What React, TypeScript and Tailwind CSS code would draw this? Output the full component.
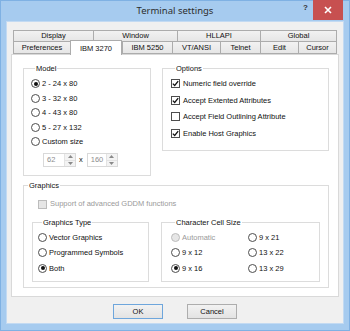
import React from "react";

const row1 = [
  { label: "Display", w: "w-[80px]" },
  { label: "Window", w: "w-[84px]" },
  { label: "HLLAPI", w: "w-[83px]" },
  { label: "Global", w: "w-[77px]" },
];

const row2 = [
  { label: "Preferences", w: "w-[57px]" },
  { label: "IBM 3270", w: "w-[52px]", active: true },
  { label: "IBM 5250", w: "w-[50px]" },
  { label: "VT/ANSI", w: "w-[48px]" },
  { label: "Telnet", w: "w-[40px]" },
  { label: "Edit", w: "w-[38px]" },
  { label: "Cursor", w: "w-[39px]" },
];

function Radio({ label, checked = false, disabled = false, h = "h-[14.5px]" }: { label: string; checked?: boolean; disabled?: boolean; h?: string }) {
  return (
    <div className={`flex items-center ${h}`}>
      <span
        className={`flex h-[9px] w-[9px] shrink-0 items-center justify-center rounded-full border ${
          disabled ? "border-[#bcbcbc] bg-[#e6e6e6]" : "border-[#4d4d4d] bg-white"
        }`}
      >
        {checked && <span className="h-[4px] w-[4px] rounded-full bg-[#111]" />}
      </span>
      <span className={`ml-[2px] whitespace-nowrap ${disabled ? "text-[#9a9a9a]" : "text-[#111]"}`}>{label}</span>
    </div>
  );
}

function Check({ label, checked = false, disabled = false, h = "h-[16.5px]" }: { label: string; checked?: boolean; disabled?: boolean; h?: string }) {
  return (
    <div className={`flex items-center ${h}`}>
      <span
        className={`flex h-[9px] w-[9px] shrink-0 items-center justify-center border ${
          disabled ? "border-[#bcbcbc] bg-[#e6e6e6]" : "border-[#4d4d4d] bg-white"
        }`}
      >
        {checked && (
          <svg width="7" height="7" viewBox="0 0 7 7">
            <path d="M0.8 3.6 L2.7 5.5 L6.2 1.2" fill="none" stroke="#111" strokeWidth="1.3" />
          </svg>
        )}
      </span>
      <span className={`ml-[3px] whitespace-nowrap ${disabled ? "text-[#9a9a9a]" : "text-[#111]"}`}>{label}</span>
    </div>
  );
}

function Spin({ value, w }: { value: string; w: string }) {
  return (
    <div className={`flex h-[14px] ${w} border border-[#d9d9d9] bg-white`}>
      <span className="flex-1 pl-[3px] leading-[12px] text-[#8d8d8d]">{value}</span>
      <div className="flex w-[11px] flex-col border-l border-[#e3e3e3] bg-[#f3f3f3]">
        <span className="flex flex-1 items-center justify-center border-b border-[#e3e3e3]">
          <svg width="5" height="3" viewBox="0 0 5 3">
            <path d="M0 3 L2.5 0 L5 3 Z" fill="#8a8a8a" />
          </svg>
        </span>
        <span className="flex flex-1 items-center justify-center">
          <svg width="5" height="3" viewBox="0 0 5 3">
            <path d="M0 0 L2.5 3 L5 0 Z" fill="#8a8a8a" />
          </svg>
        </span>
      </div>
    </div>
  );
}

function Group({ title, className, children }: { title: string; className: string; children: React.ReactNode }) {
  return (
    <fieldset className={`border border-[#dcdcdc] ${className}`}>
      <legend className="ml-[4px] px-[1px] leading-[9px] text-[#111]">{title}</legend>
      {children}
    </fieldset>
  );
}

function Button({ label, primary = false }: { label: string; primary?: boolean }) {
  return (
    <div
      className={`flex h-[15px] w-[50px] items-center justify-center border bg-gradient-to-b from-[#f2f2f2] to-[#e3e3e3] text-[#111] ${
        primary ? "border-[#6ea6dc]" : "border-[#adadad]"
      }`}
    >
      {label}
    </div>
  );
}

export default function App() {
  return (
    <div className="flex h-[331px] w-[350px] flex-col border border-[#7fb1e3] bg-[#a6cbef] font-['Liberation_Sans',Arial,sans-serif] text-[7.5px]">
      {/* title bar */}
      <div className="flex h-[20px] shrink-0 items-start">
        <div className="w-[56px]" />
        <div className="flex-1 pt-[3px] text-center font-['Noto_Sans',sans-serif] text-[9.5px] leading-[13px] text-[#2d2d2d]">
          Terminal settings
        </div>
        <div className="flex w-[56px] items-start pr-[6px]">
          <span className="ml-[10px] mt-[2px] text-[8px] font-bold leading-[10px] text-[#333]">?</span>
          <div className="-mt-[1px] ml-auto flex h-[20px] w-[30px] items-center justify-center bg-[#c75050]">
            <svg width="8" height="8" viewBox="0 0 8 8">
              <path d="M1 1 L7 7 M7 1 L1 7" stroke="#fff" strokeWidth="1.6" />
            </svg>
          </div>
        </div>
      </div>

      {/* client area */}
      <div className="mx-[5px] mb-[6px] flex flex-1 flex-col border border-[#c3daf2] bg-[#f0f0f0] px-[4px] pt-[8px]">
        {/* tabs */}
        <div className="flex flex-col px-[2px]">
          <div className="flex h-[12px]">
            {row1.map((t) => (
              <div
                key={t.label}
                className={`${t.w} flex items-center justify-center border border-r-0 border-[#acacac] bg-gradient-to-b from-[#f2f2f2] to-[#e6e6e6] text-[#111] last:border-r`}
              >
                {t.label}
              </div>
            ))}
          </div>
          <div className="flex h-[12px] items-end">
            {row2.map((t) =>
              t.active ? (
                <div
                  key={t.label}
                  className={`${t.w} relative z-10 -mb-[1px] flex h-[15px] items-start justify-center border border-b-0 border-[#acacac] bg-white pt-[2px] text-[#111]`}
                >
                  {t.label}
                </div>
              ) : (
                <div
                  key={t.label}
                  className={`${t.w} flex h-[12px] items-center justify-center border border-r-0 border-t-0 border-[#acacac] bg-gradient-to-b from-[#f2f2f2] to-[#e6e6e6] text-[#111] last:border-r`}
                >
                  {t.label}
                </div>
              )
            )}
          </div>
        </div>

        {/* tab page */}
        <div className="flex h-[243px] flex-col border border-[#d9d9d9] bg-white pl-[11px] pr-[9px] pt-[8.5px]">
          <div className="flex items-start gap-[11px]">
            <Group title="Model" className="w-[128px] pb-[8px] pl-[7px] pt-[4px]">
              <Radio label="2 - 24 x 80" checked />
              <Radio label="3 - 32 x 80" />
              <Radio label="4 - 43 x 80" />
              <Radio label="5 - 27 x 132" />
              <Radio label="Custom size" />
              <div className="ml-[12px] mt-[4px] flex items-center">
                <Spin value="62" w="w-[33px]" />
                <span className="ml-[3px] mr-[4px] text-[#111]">x</span>
                <Spin value="160" w="w-[31px]" />
              </div>
            </Group>
            <Group title="Options" className="flex-1 pb-[8px] pl-[8px] pt-[3px]">
              <Check label="Numeric field override" checked />
              <Check label="Accept Extented Attributes" checked />
              <Check label="Accept Field Outlining Attribute" />
              <Check label="Enable Host Graphics" checked />
            </Group>
          </div>

          <Group title="Graphics" className="mt-[4.5px] pb-[5px] pt-[7.5px]">
            <div className="pl-[14px]">
              <Check label="Support of advanced GDDM functions" disabled h="h-[14px]" />
            </div>
            <div className="ml-[8px] mt-[6.5px] flex gap-[12px]">
              <Group title="Graphics Type" className="w-[117px] pb-[5px] pl-[5px] pt-[3px]">
                <Radio label="Vector Graphics" h="h-[15.5px]" />
                <Radio label="Programmed Symbols" h="h-[15.5px]" />
                <Radio label="Both" checked h="h-[15.5px]" />
              </Group>
              <Group title="Character Cell Size" className="w-[159px] pb-[5px] pl-[9px] pt-[3px]">
                <div className="grid grid-cols-[77px_1fr]">
                  <Radio label="Automatic" disabled h="h-[15.5px]" />
                  <Radio label="9 x 21" h="h-[15.5px]" />
                  <Radio label="9 x 12" h="h-[15.5px]" />
                  <Radio label="13 x 22" h="h-[15.5px]" />
                  <Radio label="9 x 16" checked h="h-[15.5px]" />
                  <Radio label="13 x 29" h="h-[15.5px]" />
                </div>
              </Group>
            </div>
          </Group>
        </div>

        {/* buttons */}
        <div className="mt-[7px] flex justify-center gap-[24px]">
          <Button label="OK" primary />
          <Button label="Cancel" />
        </div>
      </div>
    </div>
  );
}
